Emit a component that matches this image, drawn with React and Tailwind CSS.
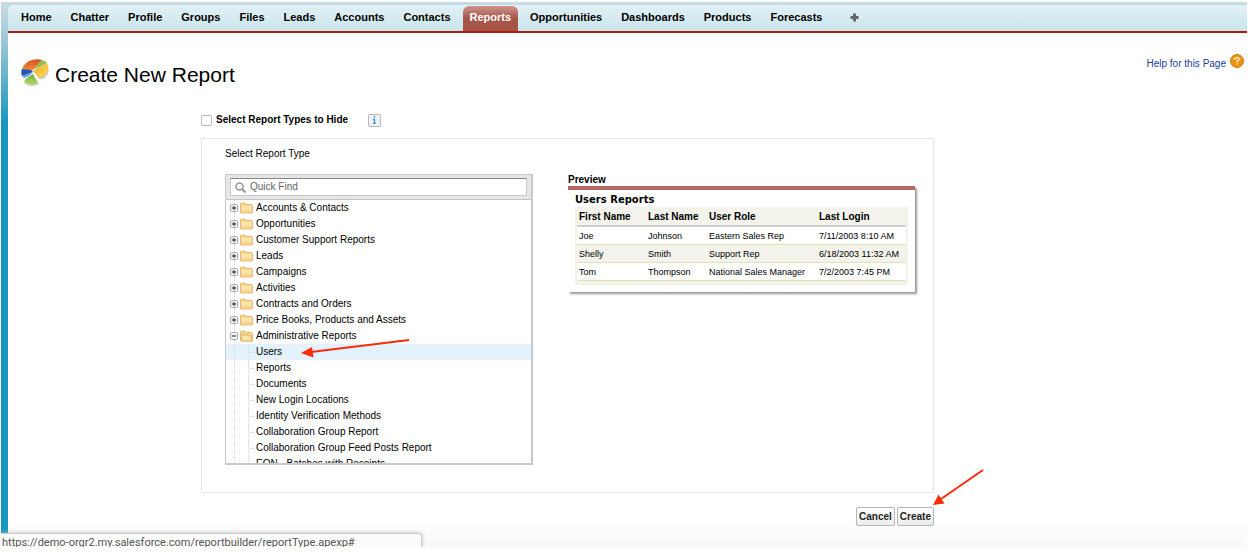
import React, { useState } from 'react';

const tabs = [
  'Home',
  'Chatter',
  'Profile',
  'Groups',
  'Files',
  'Leads',
  'Accounts',
  'Contacts',
  'Reports',
  'Opportunities',
  'Dashboards',
  'Products',
  'Forecasts'
];

const folders = [
  { name: 'Accounts & Contacts', items: [] },
  { name: 'Opportunities', items: [] },
  { name: 'Customer Support Reports', items: [] },
  { name: 'Leads', items: [] },
  { name: 'Campaigns', items: [] },
  { name: 'Activities', items: [] },
  { name: 'Contracts and Orders', items: [] },
  { name: 'Price Books, Products and Assets', items: [] },
  {
    name: 'Administrative Reports',
    items: [
      'Users',
      'Reports',
      'Documents',
      'New Login Locations',
      'Identity Verification Methods',
      'Collaboration Group Report',
      'Collaboration Group Feed Posts Report',
      'EON - Batches with Receipts'
    ]
  }
];

const previewRows = [
  ['Joe', 'Johnson', 'Eastern Sales Rep', '7/11/2003 8:10 AM'],
  ['Shelly', 'Smith', 'Support Rep', '6/18/2003 11:32 AM'],
  ['Tom', 'Thompson', 'National Sales Manager', '7/2/2003 7:45 PM']
];

function ReportIcon() {
  return (
    <svg width="28" height="28" viewBox="0 0 28 28" aria-hidden="true">
      <defs>
        <linearGradient id="orange" x1="0" y1="0" x2="0" y2="1">
          <stop offset="0" stopColor="#d9541e" />
          <stop offset="1" stopColor="#f58a3c" />
        </linearGradient>
        <linearGradient id="yellow" x1="0" y1="0" x2="1" y2="1">
          <stop offset="0" stopColor="#f6a93a" />
          <stop offset="1" stopColor="#fbe04a" />
        </linearGradient>
        <linearGradient id="green" x1="0" y1="0" x2="0" y2="1">
          <stop offset="0" stopColor="#6fae45" />
          <stop offset="1" stopColor="#b5da62" />
        </linearGradient>
      </defs>
      <path d="M16 16L27 7Q29 14 25 18Q22 21 18 20Z" fill="#cfcfcf" />
      <path d="M3 24Q9 30 18 25L15 20Z" fill="#cfcfcf" />
      <path d="M1 10Q4 3 11 1Q17 -0.5 21 1L13 10L10 12Z" fill="url(#orange)" />
      <path d="M21 1Q24 2 26 4L16 9L13 10Z" fill="#8cc152" />
      <path d="M12 12L16 9L26 4Q29 10 25 15Q22 18 18 19Z" fill="url(#yellow)" />
      <path d="M1 10L10 11L12 13L1 17Q-0.5 14 1 10Z" fill="#2456b8" />
      <path d="M1 17L12 13L9 16Q6 18 3 19Z" fill="#5b9be0" />
      <path d="M12 15L17 24Q10 28 3 23Q4 19 12 15Z" fill="url(#green)" />
    </svg>
  );
}

function HelpIcon() {
  return (
    <svg width="14" height="14" viewBox="0 0 14 14" aria-hidden="true">
      <circle cx="7" cy="7" r="6.5" fill="#ee920f" stroke="#cf7d12" />
      <path d="M2 5Q7 1 12 5Q7 7 2 5Z" fill="#f9bd5c" opacity="0.6" />
      <path d="M5 5.4Q5 3.4 7 3.4Q9 3.4 9 5.2Q9 6.2 7.8 6.9Q7 7.4 7 8.4" fill="none" stroke="#fdebc8" strokeWidth="1.4" />
      <rect x="6.3" y="9.4" width="1.4" height="1.4" fill="#fdebc8" />
    </svg>
  );
}

function ToggleIcon({ open }) {
  return (
    <svg width="8" height="16" viewBox="0 0 8 16" className="shrink-0" aria-hidden="true">
      <path d="M4.5 0V16" stroke="#d4d4d4" strokeDasharray="1 1" />
      <rect x="0.5" y="4.5" width="7" height="7" rx="1" fill="#f4f4f4" stroke="#a3a8ae" />
      <path d={open ? 'M2 8H6' : 'M2 8H6M4 6V10'} stroke="#222" />
    </svg>
  );
}

function FolderIcon({ open }) {
  return (
    <svg width="13" height="12" viewBox="0 0 13 12" className="ml-0.5 mr-[3px] shrink-0" aria-hidden="true">
      <path d="M0.5 10.5V2Q0.5 1 1.5 1H5L6 2.5H11.5Q12.5 2.5 12.5 3.5V10.5Q12.5 11 12 11H1Q0.5 11 0.5 10.5Z" fill="#f8d590" stroke="#e3bb74" />
      {open ? (
        <path d="M0.5 5H10L12.5 11H2.5Z" fill="#fce4b0" stroke="#dfb264" />
      ) : (
        <path d="M1.5 4H11.5V8H1.5Z" fill="#fbe1ab" />
      )}
    </svg>
  );
}

function TreeItem({ name, selected, onSelect }) {
  return (
    <li className={selected ? 'relative bg-[#e3f2fd]' : ''}>
      <button type="button" onClick={onSelect} className="flex h-4 w-full items-center pl-2 text-left whitespace-nowrap">
        <span className="h-4 w-3.5 border-l border-dotted border-[#dcdcdc]" />
        <span className="flex h-4 w-2 items-center border-l border-dotted border-[#dcdcdc]">
          <span className="w-1.5 border-t border-dotted border-[#dcdcdc]" />
        </span>
        {name}
      </button>
      {selected && (
        <svg width="110" height="20" viewBox="0 0 110 20" className="pointer-events-none absolute -top-1.5 left-[75px]" aria-hidden="true">
          <path d="M10 14L108 2" stroke="#fb2c0c" strokeWidth="2" />
          <path d="M0 15L11 9L12.500 19.500Z" fill="#fb2c0c" />
        </svg>
      )}
    </li>
  );
}

function ReportTypeTree() {
  const [openFolders, setOpenFolders] = useState(['Administrative Reports']);
  const [selected, setSelected] = useState('Users');

  // Open or close a folder
  const toggleFolder = (name) => {
    setOpenFolders(prev =>
      prev.includes(name) ? prev.filter(n => n !== name) : [...prev, name]
    );
  };

  return (
    <div className="w-[308px] shrink-0 border border-r-2 border-b-2 border-[#c9c9c9]">
      <div className="border-b border-[#c4c4c4] bg-[#e6e6e6] px-1 py-[3px]">
        <div className="flex h-[18px] items-center border border-[#c9c9c9] border-t-[#888] bg-white pl-1">
          <svg width="11" height="11" viewBox="0 0 11 11" className="shrink-0" aria-hidden="true">
            <circle cx="4.500" cy="4.500" r="3.500" fill="none" stroke="#999" strokeWidth="1.600" />
            <path d="M7 7L10.500 10.500" stroke="#999" strokeWidth="2" />
          </svg>
          <input
            type="text"
            aria-label="Quick Find"
            placeholder="Quick Find"
            className="ml-1 w-full text-[10px] leading-4 outline-none placeholder:text-[#666]"
          />
        </div>
      </div>
      <ul className="h-[263px] overflow-hidden">
        {folders.map((folder) => {
          const open = openFolders.includes(folder.name);
          return (
            <li key={folder.name}>
              <button
                type="button"
                aria-expanded={open}
                onClick={() => toggleFolder(folder.name)}
                className="flex h-4 w-full items-center pl-1 text-left whitespace-nowrap"
              >
                <ToggleIcon open={open} />
                <FolderIcon open={open} />
                {folder.name}
              </button>
              {open && (
                <ul>
                  {folder.items.map((item) => (
                    <TreeItem
                      key={item}
                      name={item}
                      selected={item === selected}
                      onSelect={() => setSelected(item)}
                    />
                  ))}
                </ul>
              )}
            </li>
          );
        })}
      </ul>
    </div>
  );
}

function Preview() {
  return (
    <div className="w-[347px] shrink-0">
      <h2 className="h-3 font-bold leading-3">Preview</h2>
      <div className="border-t-4 border-[#b26a60] px-[7px] pt-0.5 pb-[7px] shadow-[2px_2px_2px_#999]">
        <h3 className="h-[15px] font-['DejaVu_Sans','Verdana',sans-serif] text-[10px] leading-4 font-bold">Users Reports</h3>
        <div className="bg-[#f3f3ec] px-0.5 pb-1">
          <table className="w-full table-fixed border-collapse text-left whitespace-nowrap">
            <thead>
              <tr className="h-[17px] border-b-2 border-[#d0d0d0]">
                <th className="w-[71px] pt-0.5 pl-0.5">First Name</th>
                <th className="w-[61px] pt-0.5">Last Name</th>
                <th className="w-[110px] pt-0.5">User Role</th>
                <th className="pt-0.5">Last Login</th>
              </tr>
            </thead>
            <tbody className="text-[9px] leading-3">
              {previewRows.map((row) => (
                <tr key={row[0]} className="h-[18px] border-b border-[#e2e2b4] odd:bg-white">
                  {row.map((cell) => (
                    <td key={cell} className="pt-0.5 first:pl-0.5">{cell}</td>
                  ))}
                </tr>
              ))}
            </tbody>
          </table>
        </div>
      </div>
    </div>
  );
}

function FormButton({ children }) {
  return (
    <button
      type="button"
      className="h-[19px] rounded-xs border border-[#b5b5b5] bg-linear-to-b from-white to-[#ececec] px-0.5 text-[10px] font-bold text-[#222]"
    >
      {children}
    </button>
  );
}

export default function App() {
  return (
    <div className="relative mt-0.5 mr-px ml-px overflow-hidden bg-[linear-gradient(#c8dde5,#8fc0d2_50px,#1797c0_120px)] pt-[3px] pl-[7px] font-['Liberation_Sans',Arial,sans-serif] text-[10px] leading-4 text-black">
      <div className="rounded-tl-md bg-linear-to-b from-white from-95% to-[#f8f8f8]">
        <nav className="flex h-[28px] items-end gap-[5px] rounded-tl-md border-b-2 border-[#a81c0c] bg-linear-to-b from-[#e2f1f5] to-[#cae5ed] pl-1.5 text-[11px] font-bold">
          {tabs.map((tab) => (
            <a
              key={tab}
              href="#"
              className={
                tab === 'Reports'
                  ? 'h-[25px] rounded-t-md bg-linear-to-b from-[#cf948b] to-[#a65548] to-50% px-[7px] pt-[3px] text-white'
                  : 'h-[25px] px-[7px] pt-[3px]'
              }
            >
              {tab}
            </a>
          ))}
          <a href="#" aria-label="All Tabs" className="flex h-[25px] items-center px-4 pb-0.5">
            <svg width="9" height="9" viewBox="0 0 9 9" aria-hidden="true">
              <path d="M4.500 0.500V8.500M0.500 4.500H8.500" stroke="#666" strokeWidth="3" />
            </svg>
          </a>
        </nav>

        <header className="flex items-start justify-between pt-[21px] pr-[3px] pl-[13px]">
          <div className="flex items-start gap-1.5 pt-[5px]">
            <ReportIcon />
            <h1 className="pt-0.5 text-[21px] leading-7">Create New Report</h1>
          </div>
          <a href="#" className="flex items-start gap-1 text-[#213f9a]">
            <span className="pt-0.5">Help for this Page</span>
            <HelpIcon />
          </a>
        </header>

        <main className="ml-[193px] max-w-[733px] pt-[23px] pb-[21px]">
          <div className="flex h-4 items-center">
            <input
              id="hide-types"
              type="checkbox"
              className="size-[11px] appearance-none rounded-xs border border-[#bbb] bg-white checked:bg-[#1797c0]"
            />
            <label htmlFor="hide-types" className="ml-1 font-bold">Select Report Types to Hide</label>
            <button
              type="button"
              aria-label="Info"
              className="ml-5 flex size-[13px] items-center justify-center rounded-xs border border-[#bbb] bg-[#eef2f5]"
            >
              <svg width="5" height="8" viewBox="0 0 5 8" aria-hidden="true">
                <path d="M2.500 0V1.800M1 3.500H2.500V7M1 7.300H4" fill="none" stroke="#4a8fe0" strokeWidth="1.300" />
              </svg>
            </button>
          </div>

          <section className="mt-2.5 border border-[#e6e6e6] px-[23px] pt-[7px] pb-[27px]">
            <h2>Select Report Type</h2>
            <div className="mt-3 flex items-start gap-[35px]">
              <ReportTypeTree />
              <Preview />
            </div>
          </section>

          <div className="relative mt-3.5 flex justify-end gap-0.5">
            <FormButton>Cancel</FormButton>
            <FormButton>Create</FormButton>
            <svg width="52" height="37" viewBox="0 0 52 37" className="pointer-events-none absolute -top-[38px] -right-[51px]" aria-hidden="true">
              <path d="M8 30L50 1" stroke="#fb2c0c" strokeWidth="2" />
              <path d="M0 36L5.500 25.500L11.500 34.500Z" fill="#fb2c0c" />
            </svg>
          </div>
        </main>
      </div>

      <div className="absolute bottom-0 left-0 h-3.5 w-[421px] overflow-hidden rounded-tr-sm border-t border-r border-[#ccc] bg-[#fcfcfc] pt-px pl-px font-['Roboto',sans-serif] text-[11px] text-[#555] shadow-[0_0_4px_#bbb]">
        https://demo-orgr2.my.salesforce.com/reportbuilder/reportType.apexp#
      </div>
    </div>
  );
}
